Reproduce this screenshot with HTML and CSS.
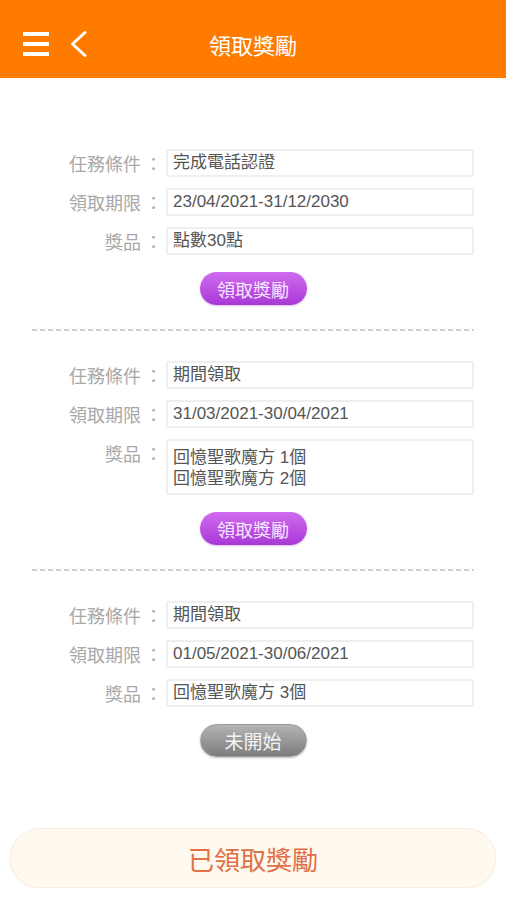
FILE: index.html
```html
<!DOCTYPE html>
<html lang="zh-Hant">
  <head>
    <meta charset="UTF-8" />
    <meta name="viewport" content="width=device-width, initial-scale=1.0" />
    <title>領取獎勵</title>
    <link rel="stylesheet" href="styles.css">
  </head>
  <body>
    <header class="topbar">
      <div class="topbar-icons">
        <svg class="icon-menu" width="26" height="24" viewBox="0 0 26 24">
          <rect x="0" y="0" width="26" height="4" fill="#fff" />
          <rect x="0" y="10" width="26" height="4" fill="#fff" />
          <rect x="0" y="20" width="26" height="4" fill="#fff" />
        </svg>
        <svg class="icon-back" width="18" height="26" viewBox="0 0 18 26">
          <path d="M15 1.5 L2.5 13 L15 24.5" fill="none" stroke="#fff" stroke-width="3" stroke-linecap="round" stroke-linejoin="round" />
        </svg>
      </div>
      <h1 class="topbar-title">領取獎勵</h1>
      <div></div>
    </header>

    <main class="tasks">
      <section class="task">
        <div class="row">
          <span class="label">任務條件</span><span class="colon">：</span>
          <div class="field">完成電話認證</div>
        </div>
        <div class="row">
          <span class="label">領取期限</span><span class="colon">：</span>
          <div class="field">23/04/2021-31/12/2030</div>
        </div>
        <div class="row">
          <span class="label">獎品</span><span class="colon">：</span>
          <div class="field">點數30點</div>
        </div>
        <button class="btn btn-claim">領取獎勵</button>
      </section>

      <hr class="divider" />

      <section class="task">
        <div class="row">
          <span class="label">任務條件</span><span class="colon">：</span>
          <div class="field">期間領取</div>
        </div>
        <div class="row">
          <span class="label">領取期限</span><span class="colon">：</span>
          <div class="field">31/03/2021-30/04/2021</div>
        </div>
        <div class="row">
          <span class="label">獎品</span><span class="colon">：</span>
          <div class="field field-multi">回憶聖歌魔方 1個<br />回憶聖歌魔方 2個</div>
        </div>
        <button class="btn btn-claim">領取獎勵</button>
      </section>

      <hr class="divider" />

      <section class="task">
        <div class="row">
          <span class="label">任務條件</span><span class="colon">：</span>
          <div class="field">期間領取</div>
        </div>
        <div class="row">
          <span class="label">領取期限</span><span class="colon">：</span>
          <div class="field">01/05/2021-30/06/2021</div>
        </div>
        <div class="row">
          <span class="label">獎品</span><span class="colon">：</span>
          <div class="field">回憶聖歌魔方 3個</div>
        </div>
        <button class="btn btn-waiting">未開始</button>
      </section>
    </main>

    <div class="footer">
      <button class="btn-history">已領取獎勵</button>
    </div>
  </body>
</html>
```

FILE: styles.css
```css
body {
  margin: 0;
  background-color: #fff;
  font-family: "Liberation Sans", "Noto Sans CJK TC", sans-serif;
}

.topbar {
  height: 78px;
  box-sizing: border-box;
  padding-top: 10px;
  background-color: #ff7b00;
  display: grid;
  grid-template-columns: 1fr auto 1fr;
  align-items: center;
}

.topbar-icons {
  display: flex;
  align-items: center;
  padding-left: 23px;
  gap: 21px;
}

.topbar-title {
  margin: 0;
  color: #fff;
  font-size: 22px;
  line-height: 28px;
  font-weight: normal;
  font-family: "Noto Sans CJK TC", sans-serif;
}

.tasks {
  padding: 71px 32px 0;
}

.task {
  display: flex;
  flex-direction: column;
  gap: 11px;
}

.row {
  display: flex;
  align-items: flex-start;
}

.label {
  width: 109px;
  height: 28px;
  text-align: right;
  color: #a8a8a8;
  font-size: 18px;
  line-height: 28px;
  font-family: "Noto Sans CJK TC", sans-serif;
}

.colon {
  width: 25px;
  height: 28px;
  text-align: center;
  color: #b0b0b0;
  font-size: 18px;
  line-height: 28px;
  font-family: "Noto Sans CJK TC", sans-serif;
}

.field {
  flex: 1;
  height: 28px;
  box-sizing: border-box;
  padding: 0 5px;
  border: 2px solid #efefef;
  border-radius: 2px;
  color: #555;
  font-size: 17px;
  line-height: 24px;
}

.field-multi {
  height: 56px;
  padding-top: 6px;
  line-height: 21px;
}

.btn {
  align-self: center;
  width: 107px;
  height: 33px;
  margin-top: 6px;
  border: none;
  border-radius: 17px;
  font-size: 18px;
  color: #f6e6ff;
  font-family: "Noto Sans CJK TC", sans-serif;
  padding: 0;
}

.btn-claim {
  background: linear-gradient(#cf6cef, #a838d6);
  box-shadow: 0 1px 2px rgba(120, 30, 160, 0.3);
}

.btn-waiting {
  background: linear-gradient(#b4b4b4, #7c7c7c);
  border: 1px solid #9a9a9a;
  color: #f4f4f4;
  font-size: 19px;
  box-shadow: 0 1px 2px rgba(0, 0, 0, 0.25);
}

.divider {
  margin: 24px 0 30px;
  border: none;
  height: 2px;
  background: repeating-linear-gradient(to right, #cfcfcf 0 5px, transparent 5px 8px);
}

.footer {
  padding: 71px 10px 0;
}

.btn-history {
  width: 100%;
  height: 60px;
  border: 1px solid #f8eedf;
  border-radius: 30px;
  background-color: #fff9ef;
  color: #e07048;
  font-size: 26px;
  font-family: "Noto Sans CJK TC", sans-serif;
  box-shadow: 0 1px 2px rgba(200, 170, 130, 0.15);
}
```
